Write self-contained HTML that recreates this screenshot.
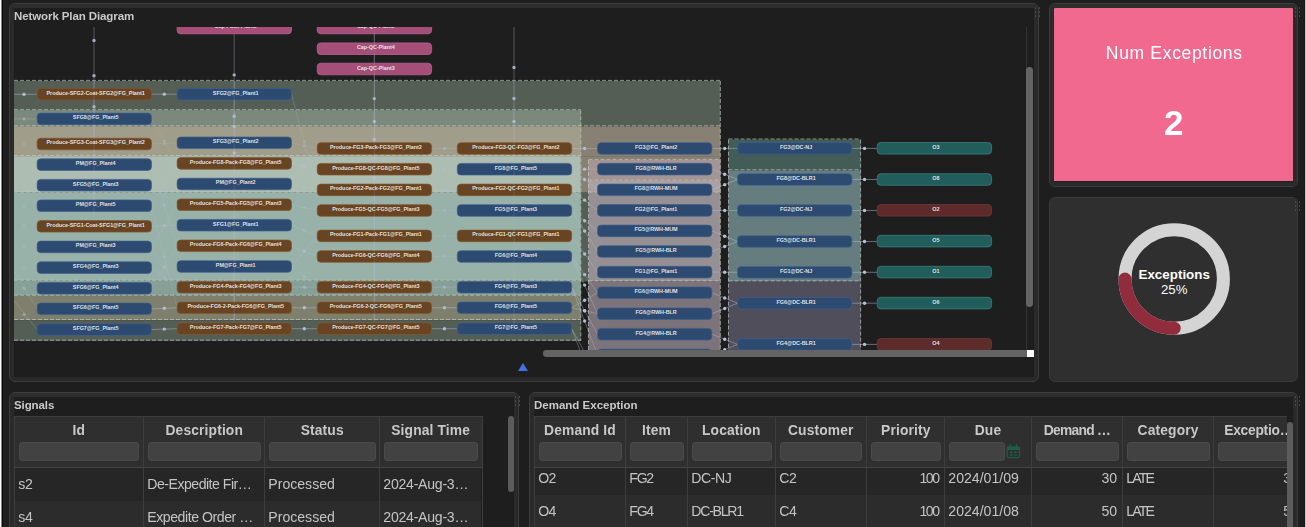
<!DOCTYPE html>
<html><head><meta charset="utf-8"><title>Dashboard</title>
<style>
*{box-sizing:border-box;margin:0;padding:0}
html,body{width:1306px;height:527px;overflow:hidden;background:#1e1e1e;font-family:"Liberation Sans",sans-serif}
body{position:relative}
.edge{position:absolute;left:0;top:0;width:2px;height:527px;background:linear-gradient(90deg,#fff 0,#fff 1.3px,#000 1.7px)}
.edge2{position:absolute;left:2px;top:0;width:1px;height:527px;background:#0a0a0a}
.redge{position:absolute;left:1304px;top:0;width:2px;height:527px;background:linear-gradient(90deg,#171717 0,#171717 1px,#c4c4c4 1px)}
.pw{position:absolute;border:1px solid #3c3c3c;border-radius:6px;background:#2a2a2a}
.panel{position:absolute;left:0;top:0;right:0;bottom:0;border:4px solid #2a2a2a;border-top-color:#2e2e2e;border-radius:5px;background:#1e1e1e;overflow:hidden}
.ptitle,.th span,.td,.pink div{will-change:transform}
.ptitle{position:absolute;left:0;top:2.2px;font-weight:bold;font-size:11.5px;color:#c9c9c9;letter-spacing:-.1px;white-space:nowrap}
.grip{position:absolute;width:6px;height:10px}
.grip b{position:absolute;width:1.6px;height:1.6px;background:#1f6b4e;border-radius:50%}
.dgwrap{position:absolute;left:0;top:18.5px;width:1012px;height:324px;overflow:hidden}
svg.dg text{font-family:"Liberation Sans",sans-serif;font-size:5.45px;font-weight:bold;fill:#f0f0f0;fill-opacity:.92;text-anchor:middle;letter-spacing:-.05px}
.vtrack{position:absolute;left:1012px;top:18.5px;width:1px;height:324px;background:#333}
.vthumb{position:absolute;left:1012.3px;top:58.8px;width:6.8px;height:240.4px;background:#646464;border-radius:3.4px}
.hthumb{position:absolute;left:528.6px;top:342.4px;width:484px;height:6.5px;background:#646464;border-radius:3.3px 0 0 3.3px}
.corner{position:absolute;left:1012.6px;top:342px;width:7px;height:7px;background:#fff}
.tri{position:absolute;left:504.4px;top:355px;width:0;height:0;border-left:5.1px solid transparent;border-right:5.1px solid transparent;border-bottom:8.6px solid #4670e2}
.pink{position:absolute;left:0;top:0;right:0;bottom:1px;background:#f2698f;color:#fff;text-align:center}
.pink .t{position:absolute;left:0;right:0;top:35.1px;font-size:17.6px;white-space:nowrap;letter-spacing:.62px;padding-left:1px}
.pink .n{position:absolute;left:0;right:0;top:95.4px;font-size:35px;font-weight:bold}
.p3{position:absolute;left:1048.5px;top:197px;width:249.5px;height:184.5px;background:#2f2f2f;border:1px solid #3a3a3a;border-radius:6px}
.p3 svg{position:absolute;left:0;top:0}
.p3 text{font-family:"Liberation Sans",sans-serif;fill:#fff;text-anchor:middle}
.tbl{position:absolute;overflow:hidden}
.th{position:absolute;top:0;height:52.5px;background:#2f2f2f;border:1px solid #3d3d3d;border-right:none;border-bottom:1px solid #444;color:#c8c8c8;font-weight:bold;font-size:13.8px;letter-spacing:.15px;text-align:center;white-space:nowrap;overflow:hidden}
.th span{position:absolute;left:0;right:0;top:6.4px}
.th i{position:absolute;left:4px;right:3.5px;top:25.8px;height:18.6px;background:#424242;border-radius:3px;border:1px solid #4a4a4a}
.td{position:absolute;height:33px;border-left:1px solid #3d3d3d;color:#c4c4c4;font-size:14.1px;line-height:33px;padding:0 4.7px 0 3.3px;white-space:nowrap;overflow:hidden}
.td.r0{background:#262626} .td.r1{background:#2c2c2c}
.vs{position:absolute;background:#5c5c5c;border-radius:3.2px}
.cal{position:absolute}
</style></head><body>
<div class="edge"></div><div class="edge2"></div><div class="redge"></div>

<div class="pw" style="left:9px;top:3px;width:1029.5px;height:378.5px"><div class="panel">
 <div class="ptitle">Network Plan Diagram</div>
 <div class="dgwrap">
<svg class="dg" width="1012" height="324" viewBox="14 26.5 1012 324">
<rect x="14" y="80.5" width="706.3" height="45.4" fill="#545e55"/>
<rect x="14" y="109.8" width="566.8" height="16.1" fill="#7b897c"/>
<rect x="14" y="125.9" width="706.3" height="29.7" fill="#888073"/>
<rect x="14" y="125.9" width="566.8" height="29.7" fill="#a09d8a"/>
<rect x="581" y="155.6" width="139.3" height="36.6" fill="#888073"/>
<rect x="14" y="155.6" width="566.8" height="36.6" fill="#aebdb2"/>
<rect x="14" y="192.2" width="566.8" height="88.1" fill="#99b2a9"/>
<rect x="14" y="280.3" width="566.8" height="15.0" fill="#869f97"/>
<rect x="14" y="295.3" width="566.8" height="24.3" fill="#7e806d"/>
<rect x="14" y="319.6" width="566.8" height="20.7" fill="#545e55"/>
<rect x="581" y="192.2" width="7.5" height="88.8" fill="#545e55"/>
<rect x="588.5" y="159.5" width="131.8" height="20.7" fill="#a29594"/>
<rect x="588.5" y="180.2" width="131.8" height="12.0" fill="#aca1a2"/>
<rect x="588.5" y="192.2" width="131.8" height="88.8" fill="#969094"/>
<rect x="588.5" y="281" width="131.8" height="71.0" fill="#7d737a"/>
<rect x="728.5" y="139.1" width="132.1" height="30.8" fill="#435c57"/>
<rect x="728.5" y="169.9" width="132.1" height="111.1" fill="#667d80"/>
<rect x="728.5" y="281" width="132.1" height="71.0" fill="#514e5b"/>
<line x1="14" y1="79.9" x2="720.3" y2="79.9" stroke="#c3cbc2" stroke-opacity=".68" stroke-width="1" stroke-dasharray="4 2"/>
<line x1="720.3" y1="80.5" x2="720.3" y2="352" stroke="#c3cbc2" stroke-opacity=".68" stroke-width="1" stroke-dasharray="4 2"/>
<line x1="14" y1="109.2" x2="580.8" y2="109.2" stroke="#c3cbc2" stroke-opacity=".68" stroke-width="1" stroke-dasharray="4 2"/>
<line x1="14" y1="125.3" x2="720.3" y2="125.3" stroke="#c3cbc2" stroke-opacity=".68" stroke-width="1" stroke-dasharray="4 2"/>
<line x1="14" y1="155.0" x2="580.8" y2="155.0" stroke="#c3cbc2" stroke-opacity=".68" stroke-width="1" stroke-dasharray="4 2"/>
<line x1="14" y1="191.6" x2="580.8" y2="191.6" stroke="#c3cbc2" stroke-opacity=".68" stroke-width="1" stroke-dasharray="4 2"/>
<line x1="14" y1="279.7" x2="580.8" y2="279.7" stroke="#c3cbc2" stroke-opacity=".68" stroke-width="1" stroke-dasharray="4 2"/>
<line x1="14" y1="294.7" x2="580.8" y2="294.7" stroke="#c3cbc2" stroke-opacity=".68" stroke-width="1" stroke-dasharray="4 2"/>
<line x1="14" y1="319.0" x2="580.8" y2="319.0" stroke="#c3cbc2" stroke-opacity=".68" stroke-width="1" stroke-dasharray="4 2"/>
<line x1="14" y1="339.7" x2="580.8" y2="339.7" stroke="#c3cbc2" stroke-opacity=".68" stroke-width="1" stroke-dasharray="4 2"/>
<line x1="580.8" y1="109.8" x2="580.8" y2="340.3" stroke="#c3cbc2" stroke-opacity=".68" stroke-width="1" stroke-dasharray="4 2"/>
<line x1="588.5" y1="158.9" x2="720.3" y2="158.9" stroke="#c3cbc2" stroke-opacity=".68" stroke-width="1" stroke-dasharray="4 2"/>
<line x1="588.5" y1="179.6" x2="720.3" y2="179.6" stroke="#c3cbc2" stroke-opacity=".68" stroke-width="1" stroke-dasharray="4 2"/>
<line x1="588.5" y1="191.6" x2="720.3" y2="191.6" stroke="#c3cbc2" stroke-opacity=".68" stroke-width="1" stroke-dasharray="4 2"/>
<line x1="588.5" y1="280.4" x2="720.3" y2="280.4" stroke="#c3cbc2" stroke-opacity=".68" stroke-width="1" stroke-dasharray="4 2"/>
<line x1="588.5" y1="159.5" x2="588.5" y2="352" stroke="#c3cbc2" stroke-opacity=".68" stroke-width="1" stroke-dasharray="4 2"/>
<line x1="728.5" y1="138.5" x2="860.6" y2="138.5" stroke="#c3cbc2" stroke-opacity=".68" stroke-width="1" stroke-dasharray="4 2"/>
<line x1="728.5" y1="169.3" x2="860.6" y2="169.3" stroke="#c3cbc2" stroke-opacity=".68" stroke-width="1" stroke-dasharray="4 2"/>
<line x1="728.5" y1="280.4" x2="860.6" y2="280.4" stroke="#c3cbc2" stroke-opacity=".68" stroke-width="1" stroke-dasharray="4 2"/>
<line x1="728.5" y1="139.1" x2="728.5" y2="352" stroke="#c3cbc2" stroke-opacity=".68" stroke-width="1" stroke-dasharray="4 2"/>
<line x1="860.6" y1="139.1" x2="860.6" y2="352" stroke="#c3cbc2" stroke-opacity=".68" stroke-width="1" stroke-dasharray="4 2"/>
<line x1="94" y1="26.5" x2="94" y2="215" stroke="#b8c2d6" stroke-opacity="0.45" stroke-width=".8"/>
<circle cx="94" cy="40" r="1.7" fill="#b4c0d8" fill-opacity="0.85"/>
<circle cx="94" cy="75.2" r="1.7" fill="#b4c0d8" fill-opacity="0.85"/>
<circle cx="94" cy="106.2" r="1.7" fill="#b4c0d8" fill-opacity="0.85"/>
<line x1="234.2" y1="26.5" x2="234.2" y2="320" stroke="#b8c2d6" stroke-opacity="0.45" stroke-width=".8"/>
<circle cx="234.2" cy="74.4" r="1.7" fill="#b4c0d8" fill-opacity="0.85"/>
<circle cx="234.2" cy="115.8" r="1.7" fill="#b4c0d8" fill-opacity="0.85"/>
<circle cx="234.2" cy="126" r="1.7" fill="#b4c0d8" fill-opacity="0.85"/>
<circle cx="234.2" cy="152.5" r="1.7" fill="#b4c0d8" fill-opacity="0.85"/>
<line x1="374.3" y1="26.5" x2="374.3" y2="320" stroke="#b8c2d6" stroke-opacity="0.45" stroke-width=".8"/>
<circle cx="374.3" cy="98.1" r="1.7" fill="#b4c0d8" fill-opacity="0.85"/>
<circle cx="374.3" cy="121" r="1.7" fill="#b4c0d8" fill-opacity="0.85"/>
<circle cx="374.3" cy="139" r="1.7" fill="#b4c0d8" fill-opacity="0.85"/>
<circle cx="374.3" cy="152" r="1.7" fill="#b4c0d8" fill-opacity="0.85"/>
<circle cx="374.3" cy="177.5" r="1.7" fill="#b4c0d8" fill-opacity="0.85"/>
<line x1="514" y1="26.5" x2="514" y2="140" stroke="#b8c2d6" stroke-opacity="0.45" stroke-width=".8"/>
<circle cx="514" cy="67" r="1.7" fill="#b4c0d8" fill-opacity="0.85"/>
<circle cx="514" cy="98" r="1.7" fill="#b4c0d8" fill-opacity="0.85"/>
<circle cx="514" cy="121" r="1.7" fill="#b4c0d8" fill-opacity="0.85"/>
<line x1="14" y1="93.8" x2="37" y2="93.8" stroke="#b8c2d6" stroke-opacity="0.55" stroke-width=".8"/>
<circle cx="24" cy="93.8" r="1.7" fill="#b4c0d8" fill-opacity="0.95"/>
<line x1="14" y1="118.4" x2="37" y2="118.4" stroke="#b8c2d6" stroke-opacity="0.3" stroke-width=".8"/>
<circle cx="24" cy="118.4" r="1.7" fill="#b4c0d8" fill-opacity="0.5"/>
<circle cx="24" cy="143.5" r="1.7" fill="#b4c0d8" fill-opacity="0.25"/>
<circle cx="24" cy="164.1" r="1.7" fill="#b4c0d8" fill-opacity="0.25"/>
<circle cx="24" cy="184.7" r="1.7" fill="#b4c0d8" fill-opacity="0.25"/>
<circle cx="24" cy="205.2" r="1.7" fill="#b4c0d8" fill-opacity="0.25"/>
<circle cx="24" cy="225.8" r="1.7" fill="#b4c0d8" fill-opacity="0.25"/>
<circle cx="24" cy="246.4" r="1.7" fill="#b4c0d8" fill-opacity="0.25"/>
<circle cx="24" cy="267.1" r="1.7" fill="#b4c0d8" fill-opacity="0.25"/>
<line x1="14" y1="300" x2="37" y2="329" stroke="#b8c2d6" stroke-opacity="0.3" stroke-width=".8"/>
<circle cx="24" cy="314" r="1.7" fill="#b4c0d8" fill-opacity="0.5"/>
<line x1="14" y1="270" x2="37" y2="308.3" stroke="#b8c2d6" stroke-opacity="0.25" stroke-width=".8"/>
<circle cx="24" cy="287.8" r="1.7" fill="#b4c0d8" fill-opacity="0.45"/>
<line x1="151.5" y1="93.6" x2="177.1" y2="93.7" stroke="#b8c2d6" stroke-opacity="0.55" stroke-width=".8"/>
<circle cx="164.3" cy="93.65" r="1.7" fill="#b4c0d8" fill-opacity="0.95"/>
<line x1="151.5" y1="118.4" x2="177.1" y2="162.9" stroke="#b8c2d6" stroke-opacity="0.22" stroke-width=".8"/>
<circle cx="164.3" cy="140.65" r="1.7" fill="#b4c0d8" fill-opacity="0.3"/>
<line x1="151.5" y1="143.5" x2="177.1" y2="142.3" stroke="#b8c2d6" stroke-opacity="0.22" stroke-width=".8"/>
<circle cx="164.3" cy="142.9" r="1.7" fill="#b4c0d8" fill-opacity="0.3"/>
<line x1="151.5" y1="164.1" x2="177.1" y2="245.3" stroke="#b8c2d6" stroke-opacity="0.22" stroke-width=".8"/>
<circle cx="164.3" cy="204.7" r="1.7" fill="#b4c0d8" fill-opacity="0.3"/>
<line x1="151.5" y1="184.7" x2="177.1" y2="204.2" stroke="#b8c2d6" stroke-opacity="0.22" stroke-width=".8"/>
<circle cx="164.3" cy="194.45" r="1.7" fill="#b4c0d8" fill-opacity="0.3"/>
<line x1="151.5" y1="205.2" x2="177.1" y2="162.9" stroke="#b8c2d6" stroke-opacity="0.22" stroke-width=".8"/>
<circle cx="164.3" cy="184.05" r="1.7" fill="#b4c0d8" fill-opacity="0.3"/>
<line x1="151.5" y1="225.8" x2="177.1" y2="224.7" stroke="#b8c2d6" stroke-opacity="0.22" stroke-width=".8"/>
<circle cx="164.3" cy="225.25" r="1.7" fill="#b4c0d8" fill-opacity="0.3"/>
<line x1="151.5" y1="246.4" x2="177.1" y2="204.2" stroke="#b8c2d6" stroke-opacity="0.22" stroke-width=".8"/>
<circle cx="164.3" cy="225.3" r="1.7" fill="#b4c0d8" fill-opacity="0.3"/>
<line x1="151.5" y1="246.4" x2="177.1" y2="286.7" stroke="#b8c2d6" stroke-opacity="0.22" stroke-width=".8"/>
<circle cx="164.3" cy="266.55" r="1.7" fill="#b4c0d8" fill-opacity="0.3"/>
<line x1="151.5" y1="267.1" x2="177.1" y2="286.7" stroke="#b8c2d6" stroke-opacity="0.22" stroke-width=".8"/>
<circle cx="164.3" cy="276.9" r="1.7" fill="#b4c0d8" fill-opacity="0.3"/>
<line x1="151.5" y1="287.8" x2="177.1" y2="245.3" stroke="#b8c2d6" stroke-opacity="0.22" stroke-width=".8"/>
<circle cx="164.3" cy="266.55" r="1.7" fill="#b4c0d8" fill-opacity="0.3"/>
<line x1="151.5" y1="205.2" x2="177.1" y2="307.3" stroke="#b8c2d6" stroke-opacity="0.22" stroke-width=".8"/>
<circle cx="164.3" cy="256.25" r="1.7" fill="#b4c0d8" fill-opacity="0.3"/>
<line x1="151.5" y1="308.3" x2="177.1" y2="307.3" stroke="#b8c2d6" stroke-opacity="0.55" stroke-width=".8"/>
<circle cx="164.3" cy="307.8" r="1.7" fill="#b4c0d8" fill-opacity="0.95"/>
<line x1="151.5" y1="329.0" x2="177.1" y2="328.2" stroke="#b8c2d6" stroke-opacity="0.55" stroke-width=".8"/>
<circle cx="164.3" cy="328.6" r="1.7" fill="#b4c0d8" fill-opacity="0.95"/>
<line x1="291.5" y1="93.7" x2="317.2" y2="189.4" stroke="#b8c2d6" stroke-opacity="0.27" stroke-width=".8"/>
<circle cx="304.35" cy="141.55" r="1.7" fill="#b4c0d8" fill-opacity="0.35"/>
<line x1="291.5" y1="142.3" x2="317.2" y2="148.0" stroke="#b8c2d6" stroke-opacity="0.27" stroke-width=".8"/>
<circle cx="304.35" cy="145.15" r="1.7" fill="#b4c0d8" fill-opacity="0.35"/>
<line x1="291.5" y1="162.9" x2="317.2" y2="168.7" stroke="#b8c2d6" stroke-opacity="0.27" stroke-width=".8"/>
<circle cx="304.35" cy="165.8" r="1.7" fill="#b4c0d8" fill-opacity="0.35"/>
<line x1="291.5" y1="183.5" x2="317.2" y2="189.4" stroke="#b8c2d6" stroke-opacity="0.27" stroke-width=".8"/>
<circle cx="304.35" cy="186.45" r="1.7" fill="#b4c0d8" fill-opacity="0.35"/>
<line x1="291.5" y1="183.5" x2="317.2" y2="148.0" stroke="#b8c2d6" stroke-opacity="0.27" stroke-width=".8"/>
<circle cx="304.35" cy="165.75" r="1.7" fill="#b4c0d8" fill-opacity="0.35"/>
<line x1="291.5" y1="204.2" x2="317.2" y2="210.0" stroke="#b8c2d6" stroke-opacity="0.27" stroke-width=".8"/>
<circle cx="304.35" cy="207.1" r="1.7" fill="#b4c0d8" fill-opacity="0.35"/>
<line x1="291.5" y1="224.7" x2="317.2" y2="235.4" stroke="#b8c2d6" stroke-opacity="0.27" stroke-width=".8"/>
<circle cx="304.35" cy="230.05" r="1.7" fill="#b4c0d8" fill-opacity="0.35"/>
<line x1="291.5" y1="245.3" x2="317.2" y2="256.0" stroke="#b8c2d6" stroke-opacity="0.27" stroke-width=".8"/>
<circle cx="304.35" cy="250.65" r="1.7" fill="#b4c0d8" fill-opacity="0.35"/>
<line x1="291.5" y1="266.0" x2="317.2" y2="235.4" stroke="#b8c2d6" stroke-opacity="0.27" stroke-width=".8"/>
<circle cx="304.35" cy="250.7" r="1.7" fill="#b4c0d8" fill-opacity="0.35"/>
<line x1="291.5" y1="266.0" x2="317.2" y2="286.7" stroke="#b8c2d6" stroke-opacity="0.27" stroke-width=".8"/>
<circle cx="304.35" cy="276.35" r="1.7" fill="#b4c0d8" fill-opacity="0.35"/>
<line x1="291.5" y1="286.7" x2="317.2" y2="286.7" stroke="#b8c2d6" stroke-opacity="0.4" stroke-width=".8"/>
<circle cx="304.35" cy="286.7" r="1.7" fill="#b4c0d8" fill-opacity="0.6"/>
<line x1="291.5" y1="307.3" x2="317.2" y2="307.3" stroke="#b8c2d6" stroke-opacity="0.55" stroke-width=".8"/>
<circle cx="304.35" cy="307.3" r="1.7" fill="#b4c0d8" fill-opacity="0.95"/>
<line x1="291.5" y1="328.2" x2="317.2" y2="328.2" stroke="#b8c2d6" stroke-opacity="0.55" stroke-width=".8"/>
<circle cx="304.35" cy="328.2" r="1.7" fill="#b4c0d8" fill-opacity="0.95"/>
<line x1="431.6" y1="148.0" x2="457.3" y2="148.0" stroke="#b8c2d6" stroke-opacity="0.3" stroke-width=".8"/>
<circle cx="444.45000000000005" cy="148.0" r="1.7" fill="#b4c0d8" fill-opacity="0.5"/>
<line x1="431.6" y1="168.7" x2="457.3" y2="168.7" stroke="#b8c2d6" stroke-opacity="0.3" stroke-width=".8"/>
<circle cx="444.45000000000005" cy="168.7" r="1.7" fill="#b4c0d8" fill-opacity="0.5"/>
<line x1="431.6" y1="189.4" x2="457.3" y2="189.4" stroke="#b8c2d6" stroke-opacity="0.3" stroke-width=".8"/>
<circle cx="444.45000000000005" cy="189.4" r="1.7" fill="#b4c0d8" fill-opacity="0.5"/>
<line x1="431.6" y1="210.0" x2="457.3" y2="210.0" stroke="#b8c2d6" stroke-opacity="0.22" stroke-width=".8"/>
<circle cx="444.45000000000005" cy="210.0" r="1.7" fill="#b4c0d8" fill-opacity="0.3"/>
<line x1="431.6" y1="235.4" x2="457.3" y2="235.4" stroke="#b8c2d6" stroke-opacity="0.22" stroke-width=".8"/>
<circle cx="444.45000000000005" cy="235.4" r="1.7" fill="#b4c0d8" fill-opacity="0.3"/>
<line x1="431.6" y1="256.0" x2="457.3" y2="256.0" stroke="#b8c2d6" stroke-opacity="0.22" stroke-width=".8"/>
<circle cx="444.45000000000005" cy="256.0" r="1.7" fill="#b4c0d8" fill-opacity="0.3"/>
<line x1="431.6" y1="286.7" x2="457.3" y2="286.7" stroke="#b8c2d6" stroke-opacity="0.4" stroke-width=".8"/>
<circle cx="444.45000000000005" cy="286.7" r="1.7" fill="#b4c0d8" fill-opacity="0.6"/>
<line x1="431.6" y1="307.3" x2="457.3" y2="307.3" stroke="#b8c2d6" stroke-opacity="0.55" stroke-width=".8"/>
<circle cx="444.45000000000005" cy="307.3" r="1.7" fill="#b4c0d8" fill-opacity="0.95"/>
<line x1="431.6" y1="328.2" x2="457.3" y2="328.2" stroke="#b8c2d6" stroke-opacity="0.55" stroke-width=".8"/>
<circle cx="444.45000000000005" cy="328.2" r="1.7" fill="#b4c0d8" fill-opacity="0.95"/>
<line x1="571.7" y1="148.0" x2="597.5" y2="148.0" stroke="#b8c2d6" stroke-opacity="0.45" stroke-width=".8"/>
<circle cx="584.6" cy="148.0" r="1.7" fill="#b4c0d8" fill-opacity="0.95"/>
<line x1="571.7" y1="168.7" x2="597.5" y2="168.6" stroke="#b8c2d6" stroke-opacity="0.45" stroke-width=".8"/>
<circle cx="584.6" cy="168.64999999999998" r="1.7" fill="#b4c0d8" fill-opacity="0.95"/>
<line x1="571.7" y1="168.7" x2="597.5" y2="189.3" stroke="#b8c2d6" stroke-opacity="0.45" stroke-width=".8"/>
<circle cx="584.6" cy="179.0" r="1.7" fill="#b4c0d8" fill-opacity="0.95"/>
<line x1="571.7" y1="189.4" x2="597.5" y2="209.9" stroke="#b8c2d6" stroke-opacity="0.45" stroke-width=".8"/>
<circle cx="584.6" cy="199.65" r="1.7" fill="#b4c0d8" fill-opacity="0.95"/>
<line x1="571.7" y1="210.0" x2="597.5" y2="230.4" stroke="#b8c2d6" stroke-opacity="0.45" stroke-width=".8"/>
<circle cx="584.6" cy="220.2" r="1.7" fill="#b4c0d8" fill-opacity="0.95"/>
<line x1="571.7" y1="210.0" x2="597.5" y2="251.0" stroke="#b8c2d6" stroke-opacity="0.45" stroke-width=".8"/>
<circle cx="584.6" cy="230.5" r="1.7" fill="#b4c0d8" fill-opacity="0.95"/>
<line x1="571.7" y1="235.4" x2="597.5" y2="271.6" stroke="#b8c2d6" stroke-opacity="0.45" stroke-width=".8"/>
<circle cx="584.6" cy="253.5" r="1.7" fill="#b4c0d8" fill-opacity="0.95"/>
<line x1="571.7" y1="256.0" x2="597.5" y2="292.2" stroke="#b8c2d6" stroke-opacity="0.45" stroke-width=".8"/>
<circle cx="584.6" cy="274.1" r="1.7" fill="#b4c0d8" fill-opacity="0.95"/>
<line x1="571.7" y1="256.0" x2="597.5" y2="313.2" stroke="#b8c2d6" stroke-opacity="0.45" stroke-width=".8"/>
<circle cx="584.6" cy="284.6" r="1.7" fill="#b4c0d8" fill-opacity="0.95"/>
<line x1="571.7" y1="307.3" x2="597.5" y2="292.2" stroke="#b8c2d6" stroke-opacity="0.45" stroke-width=".8"/>
<circle cx="584.6" cy="299.75" r="1.7" fill="#b4c0d8" fill-opacity="0.95"/>
<line x1="571.7" y1="307.3" x2="597.5" y2="313.2" stroke="#b8c2d6" stroke-opacity="0.45" stroke-width=".8"/>
<circle cx="584.6" cy="310.25" r="1.7" fill="#b4c0d8" fill-opacity="0.95"/>
<line x1="571.7" y1="286.7" x2="597.5" y2="333.7" stroke="#b8c2d6" stroke-opacity="0.45" stroke-width=".8"/>
<circle cx="584.6" cy="310.2" r="1.7" fill="#b4c0d8" fill-opacity="0.95"/>
<line x1="571.7" y1="286.7" x2="597.5" y2="354.4" stroke="#b8c2d6" stroke-opacity="0.45" stroke-width=".8"/>
<circle cx="584.6" cy="320.54999999999995" r="1.7" fill="#b4c0d8" fill-opacity="0.95"/>
<line x1="571.7" y1="328.2" x2="597.5" y2="375.0" stroke="#b8c2d6" stroke-opacity="0.45" stroke-width=".8"/>
<circle cx="584.6" cy="351.6" r="1.7" fill="#b4c0d8" fill-opacity="0.95"/>
<line x1="571.7" y1="328.2" x2="597.5" y2="395.6" stroke="#b8c2d6" stroke-opacity="0.45" stroke-width=".8"/>
<circle cx="584.6" cy="361.9" r="1.7" fill="#b4c0d8" fill-opacity="0.95"/>
<line x1="711.9" y1="148.0" x2="737.5" y2="147.9" stroke="#b8c2d6" stroke-opacity="0.55" stroke-width=".8"/>
<circle cx="724.7" cy="147.95" r="1.7" fill="#b4c0d8" fill-opacity="1"/>
<line x1="711.9" y1="168.6" x2="737.5" y2="179.0" stroke="#b8c2d6" stroke-opacity="0.55" stroke-width=".8"/>
<circle cx="724.7" cy="173.8" r="1.7" fill="#b4c0d8" fill-opacity="1"/>
<line x1="711.9" y1="189.3" x2="737.5" y2="179.0" stroke="#b8c2d6" stroke-opacity="0.55" stroke-width=".8"/>
<circle cx="724.7" cy="184.15" r="1.7" fill="#b4c0d8" fill-opacity="1"/>
<line x1="711.9" y1="209.9" x2="737.5" y2="210.0" stroke="#b8c2d6" stroke-opacity="0.55" stroke-width=".8"/>
<circle cx="724.7" cy="209.95" r="1.7" fill="#b4c0d8" fill-opacity="1"/>
<line x1="711.9" y1="230.4" x2="737.5" y2="241.0" stroke="#b8c2d6" stroke-opacity="0.55" stroke-width=".8"/>
<circle cx="724.7" cy="235.7" r="1.7" fill="#b4c0d8" fill-opacity="1"/>
<line x1="711.9" y1="251.0" x2="737.5" y2="241.0" stroke="#b8c2d6" stroke-opacity="0.55" stroke-width=".8"/>
<circle cx="724.7" cy="246.0" r="1.7" fill="#b4c0d8" fill-opacity="1"/>
<line x1="711.9" y1="271.6" x2="737.5" y2="271.8" stroke="#b8c2d6" stroke-opacity="0.55" stroke-width=".8"/>
<circle cx="724.7" cy="271.70000000000005" r="1.7" fill="#b4c0d8" fill-opacity="1"/>
<line x1="711.9" y1="292.2" x2="737.5" y2="302.7" stroke="#b8c2d6" stroke-opacity="0.55" stroke-width=".8"/>
<circle cx="724.7" cy="297.45" r="1.7" fill="#b4c0d8" fill-opacity="1"/>
<line x1="711.9" y1="313.2" x2="737.5" y2="302.7" stroke="#b8c2d6" stroke-opacity="0.55" stroke-width=".8"/>
<circle cx="724.7" cy="307.95" r="1.7" fill="#b4c0d8" fill-opacity="1"/>
<line x1="711.9" y1="333.7" x2="737.5" y2="343.9" stroke="#b8c2d6" stroke-opacity="0.55" stroke-width=".8"/>
<circle cx="724.7" cy="338.79999999999995" r="1.7" fill="#b4c0d8" fill-opacity="1"/>
<line x1="711.9" y1="354.4" x2="737.5" y2="343.9" stroke="#b8c2d6" stroke-opacity="0.55" stroke-width=".8"/>
<circle cx="724.7" cy="349.15" r="1.7" fill="#b4c0d8" fill-opacity="1"/>
<line x1="851.9" y1="147.9" x2="877.2" y2="147.9" stroke="#b8c2d6" stroke-opacity="0.6" stroke-width=".8"/>
<circle cx="864.55" cy="147.9" r="1.7" fill="#b4c0d8" fill-opacity="1"/>
<line x1="851.9" y1="179.0" x2="877.2" y2="179.0" stroke="#b8c2d6" stroke-opacity="0.6" stroke-width=".8"/>
<circle cx="864.55" cy="179.0" r="1.7" fill="#b4c0d8" fill-opacity="1"/>
<line x1="851.9" y1="210.0" x2="877.2" y2="210.0" stroke="#b8c2d6" stroke-opacity="0.6" stroke-width=".8"/>
<circle cx="864.55" cy="210.0" r="1.7" fill="#b4c0d8" fill-opacity="1"/>
<line x1="851.9" y1="241.0" x2="877.2" y2="241.0" stroke="#b8c2d6" stroke-opacity="0.6" stroke-width=".8"/>
<circle cx="864.55" cy="241.0" r="1.7" fill="#b4c0d8" fill-opacity="1"/>
<line x1="851.9" y1="271.8" x2="877.2" y2="271.8" stroke="#b8c2d6" stroke-opacity="0.6" stroke-width=".8"/>
<circle cx="864.55" cy="271.8" r="1.7" fill="#b4c0d8" fill-opacity="1"/>
<line x1="851.9" y1="302.7" x2="877.2" y2="302.7" stroke="#b8c2d6" stroke-opacity="0.6" stroke-width=".8"/>
<circle cx="864.55" cy="302.7" r="1.7" fill="#b4c0d8" fill-opacity="1"/>
<line x1="851.9" y1="343.9" x2="877.2" y2="343.9" stroke="#b8c2d6" stroke-opacity="0.6" stroke-width=".8"/>
<circle cx="864.55" cy="343.9" r="1.7" fill="#b4c0d8" fill-opacity="1"/>
<rect x="37.1" y="87.8" width="114.4" height="11.6" rx="3.6" fill="#684422" stroke="#84592f" stroke-width=".7"/>
<text x="95.7" y="94.0">Produce-SFG2-Coat-SFG2@FG_Plant1</text>
<rect x="37.1" y="112.6" width="114.4" height="11.6" rx="3.6" fill="#2d4a70" stroke="#41618f" stroke-width=".7"/>
<text x="95.7" y="118.9">SFG8@FG_Plant5</text>
<rect x="37.1" y="137.7" width="114.4" height="11.6" rx="3.6" fill="#684422" stroke="#84592f" stroke-width=".7"/>
<text x="95.7" y="143.9">Produce-SFG3-Coat-SFG3@FG_Plant2</text>
<rect x="37.1" y="158.3" width="114.4" height="11.6" rx="3.6" fill="#2d4a70" stroke="#41618f" stroke-width=".7"/>
<text x="95.7" y="164.5">PM@FG_Plant4</text>
<rect x="37.1" y="178.9" width="114.4" height="11.6" rx="3.6" fill="#2d4a70" stroke="#41618f" stroke-width=".7"/>
<text x="95.7" y="185.1">SFG5@FG_Plant3</text>
<rect x="37.1" y="199.4" width="114.4" height="11.6" rx="3.6" fill="#2d4a70" stroke="#41618f" stroke-width=".7"/>
<text x="95.7" y="205.6">PM@FG_Plant5</text>
<rect x="37.1" y="220.0" width="114.4" height="11.6" rx="3.6" fill="#684422" stroke="#84592f" stroke-width=".7"/>
<text x="95.7" y="226.2">Produce-SFG1-Coat-SFG1@FG_Plant1</text>
<rect x="37.1" y="240.6" width="114.4" height="11.6" rx="3.6" fill="#2d4a70" stroke="#41618f" stroke-width=".7"/>
<text x="95.7" y="246.8">PM@FG_Plant3</text>
<rect x="37.1" y="261.3" width="114.4" height="11.6" rx="3.6" fill="#2d4a70" stroke="#41618f" stroke-width=".7"/>
<text x="95.7" y="267.6">SFG4@FG_Plant3</text>
<rect x="37.1" y="282.0" width="114.4" height="11.6" rx="3.6" fill="#2d4a70" stroke="#41618f" stroke-width=".7"/>
<text x="95.7" y="288.2">SFG6@FG_Plant4</text>
<rect x="37.1" y="302.5" width="114.4" height="11.6" rx="3.6" fill="#2d4a70" stroke="#41618f" stroke-width=".7"/>
<text x="95.7" y="308.8">SFG6@FG_Plant5</text>
<rect x="37.1" y="323.2" width="114.4" height="11.6" rx="3.6" fill="#2d4a70" stroke="#41618f" stroke-width=".7"/>
<text x="95.7" y="329.4">SFG7@FG_Plant5</text>
<rect x="177.1" y="21.7" width="114.4" height="11.6" rx="3.6" fill="#a44e78" stroke="#c06a99" stroke-width=".7"/>
<text x="235.7" y="27.9">Cap-Pack-Plant5</text>
<rect x="177.1" y="87.9" width="114.4" height="11.6" rx="3.6" fill="#2d4a70" stroke="#41618f" stroke-width=".7"/>
<text x="235.7" y="94.2">SFG2@FG_Plant1</text>
<rect x="177.1" y="136.5" width="114.4" height="11.6" rx="3.6" fill="#2d4a70" stroke="#41618f" stroke-width=".7"/>
<text x="235.7" y="142.8">SFG3@FG_Plant2</text>
<rect x="177.1" y="157.1" width="114.4" height="11.6" rx="3.6" fill="#684422" stroke="#84592f" stroke-width=".7"/>
<text x="235.7" y="163.3">Produce-FG8-Pack-FG8@FG_Plant5</text>
<rect x="177.1" y="177.7" width="114.4" height="11.6" rx="3.6" fill="#2d4a70" stroke="#41618f" stroke-width=".7"/>
<text x="235.7" y="183.9">PM@FG_Plant2</text>
<rect x="177.1" y="198.4" width="114.4" height="11.6" rx="3.6" fill="#684422" stroke="#84592f" stroke-width=".7"/>
<text x="235.7" y="204.6">Produce-FG5-Pack-FG5@FG_Plant3</text>
<rect x="177.1" y="218.9" width="114.4" height="11.6" rx="3.6" fill="#2d4a70" stroke="#41618f" stroke-width=".7"/>
<text x="235.7" y="225.1">SFG1@FG_Plant1</text>
<rect x="177.1" y="239.5" width="114.4" height="11.6" rx="3.6" fill="#684422" stroke="#84592f" stroke-width=".7"/>
<text x="235.7" y="245.8">Produce-FG6-Pack-FG6@FG_Plant4</text>
<rect x="177.1" y="260.2" width="114.4" height="11.6" rx="3.6" fill="#2d4a70" stroke="#41618f" stroke-width=".7"/>
<text x="235.7" y="266.4">PM@FG_Plant1</text>
<rect x="177.1" y="280.9" width="114.4" height="11.6" rx="3.6" fill="#684422" stroke="#84592f" stroke-width=".7"/>
<text x="235.7" y="287.1">Produce-FG4-Pack-FG4@FG_Plant3</text>
<rect x="177.1" y="301.5" width="114.4" height="11.6" rx="3.6" fill="#684422" stroke="#84592f" stroke-width=".7"/>
<text x="235.7" y="307.8">Produce-FG6-2-Pack-FG6@FG_Plant5</text>
<rect x="177.1" y="322.4" width="114.4" height="11.6" rx="3.6" fill="#684422" stroke="#84592f" stroke-width=".7"/>
<text x="235.7" y="328.6">Produce-FG7-Pack-FG7@FG_Plant5</text>
<rect x="317.2" y="21.7" width="114.4" height="11.6" rx="3.6" fill="#a44e78" stroke="#c06a99" stroke-width=".7"/>
<text x="375.8" y="27.9">Cap-QC-Plant5</text>
<rect x="317.2" y="42.4" width="114.4" height="11.6" rx="3.6" fill="#a44e78" stroke="#c06a99" stroke-width=".7"/>
<text x="375.8" y="48.7">Cap-QC-Plant4</text>
<rect x="317.2" y="62.7" width="114.4" height="11.6" rx="3.6" fill="#a44e78" stroke="#c06a99" stroke-width=".7"/>
<text x="375.8" y="69.0">Cap-QC-Plant3</text>
<rect x="317.2" y="142.2" width="114.4" height="11.6" rx="3.6" fill="#684422" stroke="#84592f" stroke-width=".7"/>
<text x="375.8" y="148.4">Produce-FG3-Pack-FG3@FG_Plant2</text>
<rect x="317.2" y="162.9" width="114.4" height="11.6" rx="3.6" fill="#684422" stroke="#84592f" stroke-width=".7"/>
<text x="375.8" y="169.1">Produce-FG8-QC-FG8@FG_Plant5</text>
<rect x="317.2" y="183.6" width="114.4" height="11.6" rx="3.6" fill="#684422" stroke="#84592f" stroke-width=".7"/>
<text x="375.8" y="189.8">Produce-FG2-Pack-FG2@FG_Plant1</text>
<rect x="317.2" y="204.2" width="114.4" height="11.6" rx="3.6" fill="#684422" stroke="#84592f" stroke-width=".7"/>
<text x="375.8" y="210.4">Produce-FG5-QC-FG5@FG_Plant3</text>
<rect x="317.2" y="229.6" width="114.4" height="11.6" rx="3.6" fill="#684422" stroke="#84592f" stroke-width=".7"/>
<text x="375.8" y="235.8">Produce-FG1-Pack-FG1@FG_Plant1</text>
<rect x="317.2" y="250.2" width="114.4" height="11.6" rx="3.6" fill="#684422" stroke="#84592f" stroke-width=".7"/>
<text x="375.8" y="256.4">Produce-FG6-QC-FG6@FG_Plant4</text>
<rect x="317.2" y="280.9" width="114.4" height="11.6" rx="3.6" fill="#684422" stroke="#84592f" stroke-width=".7"/>
<text x="375.8" y="287.1">Produce-FG4-QC-FG4@FG_Plant3</text>
<rect x="317.2" y="301.5" width="114.4" height="11.6" rx="3.6" fill="#684422" stroke="#84592f" stroke-width=".7"/>
<text x="375.8" y="307.8">Produce-FG6-2-QC-FG6@FG_Plant5</text>
<rect x="317.2" y="322.4" width="114.4" height="11.6" rx="3.6" fill="#684422" stroke="#84592f" stroke-width=".7"/>
<text x="375.8" y="328.6">Produce-FG7-QC-FG7@FG_Plant5</text>
<rect x="457.3" y="142.2" width="114.4" height="11.6" rx="3.6" fill="#684422" stroke="#84592f" stroke-width=".7"/>
<text x="515.9" y="148.4">Produce-FG3-QC-FG3@FG_Plant2</text>
<rect x="457.3" y="162.9" width="114.4" height="11.6" rx="3.6" fill="#2d4a70" stroke="#41618f" stroke-width=".7"/>
<text x="515.9" y="169.1">FG8@FG_Plant5</text>
<rect x="457.3" y="183.6" width="114.4" height="11.6" rx="3.6" fill="#684422" stroke="#84592f" stroke-width=".7"/>
<text x="515.9" y="189.8">Produce-FG2-QC-FG2@FG_Plant1</text>
<rect x="457.3" y="204.2" width="114.4" height="11.6" rx="3.6" fill="#2d4a70" stroke="#41618f" stroke-width=".7"/>
<text x="515.9" y="210.4">FG5@FG_Plant3</text>
<rect x="457.3" y="229.6" width="114.4" height="11.6" rx="3.6" fill="#684422" stroke="#84592f" stroke-width=".7"/>
<text x="515.9" y="235.8">Produce-FG1-QC-FG1@FG_Plant1</text>
<rect x="457.3" y="250.2" width="114.4" height="11.6" rx="3.6" fill="#2d4a70" stroke="#41618f" stroke-width=".7"/>
<text x="515.9" y="256.4">FG6@FG_Plant4</text>
<rect x="457.3" y="280.9" width="114.4" height="11.6" rx="3.6" fill="#2d4a70" stroke="#41618f" stroke-width=".7"/>
<text x="515.9" y="287.1">FG4@FG_Plant3</text>
<rect x="457.3" y="301.5" width="114.4" height="11.6" rx="3.6" fill="#2d4a70" stroke="#41618f" stroke-width=".7"/>
<text x="515.9" y="307.8">FG6@FG_Plant5</text>
<rect x="457.3" y="322.4" width="114.4" height="11.6" rx="3.6" fill="#2d4a70" stroke="#41618f" stroke-width=".7"/>
<text x="515.9" y="328.6">FG7@FG_Plant5</text>
<rect x="597.5" y="142.2" width="114.4" height="11.6" rx="3.6" fill="#2d4a70" stroke="#41618f" stroke-width=".7"/>
<text x="656.1" y="148.4">FG3@FG_Plant2</text>
<rect x="597.5" y="162.8" width="114.4" height="11.6" rx="3.6" fill="#2d4a70" stroke="#41618f" stroke-width=".7"/>
<text x="656.1" y="169.0">FG8@RWH-BLR</text>
<rect x="597.5" y="183.5" width="114.4" height="11.6" rx="3.6" fill="#2d4a70" stroke="#41618f" stroke-width=".7"/>
<text x="656.1" y="189.8">FG8@RWH-MUM</text>
<rect x="597.5" y="204.1" width="114.4" height="11.6" rx="3.6" fill="#2d4a70" stroke="#41618f" stroke-width=".7"/>
<text x="656.1" y="210.3">FG2@FG_Plant1</text>
<rect x="597.5" y="224.6" width="114.4" height="11.6" rx="3.6" fill="#2d4a70" stroke="#41618f" stroke-width=".7"/>
<text x="656.1" y="230.8">FG5@RWH-MUM</text>
<rect x="597.5" y="245.2" width="114.4" height="11.6" rx="3.6" fill="#2d4a70" stroke="#41618f" stroke-width=".7"/>
<text x="656.1" y="251.4">FG5@RWH-BLR</text>
<rect x="597.5" y="265.8" width="114.4" height="11.6" rx="3.6" fill="#2d4a70" stroke="#41618f" stroke-width=".7"/>
<text x="656.1" y="272.1">FG1@FG_Plant1</text>
<rect x="597.5" y="286.4" width="114.4" height="11.6" rx="3.6" fill="#2d4a70" stroke="#41618f" stroke-width=".7"/>
<text x="656.1" y="292.6">FG6@RWH-MUM</text>
<rect x="597.5" y="307.4" width="114.4" height="11.6" rx="3.6" fill="#2d4a70" stroke="#41618f" stroke-width=".7"/>
<text x="656.1" y="313.6">FG6@RWH-BLR</text>
<rect x="597.5" y="327.9" width="114.4" height="11.6" rx="3.6" fill="#2d4a70" stroke="#41618f" stroke-width=".7"/>
<text x="656.1" y="334.1">FG4@RWH-BLR</text>
<rect x="597.5" y="348.6" width="114.4" height="11.6" rx="3.6" fill="#2d4a70" stroke="#41618f" stroke-width=".7"/>
<text x="656.1" y="354.8">FG4@RWH-MUM</text>
<rect x="737.5" y="142.1" width="114.4" height="11.6" rx="3.6" fill="#2d4a70" stroke="#41618f" stroke-width=".7"/>
<text x="796.1" y="148.3">FG3@DC-NJ</text>
<rect x="737.5" y="173.2" width="114.4" height="11.6" rx="3.6" fill="#2d4a70" stroke="#41618f" stroke-width=".7"/>
<text x="796.1" y="179.4">FG8@DC-BLR1</text>
<rect x="737.5" y="204.2" width="114.4" height="11.6" rx="3.6" fill="#2d4a70" stroke="#41618f" stroke-width=".7"/>
<text x="796.1" y="210.4">FG2@DC-NJ</text>
<rect x="737.5" y="235.2" width="114.4" height="11.6" rx="3.6" fill="#2d4a70" stroke="#41618f" stroke-width=".7"/>
<text x="796.1" y="241.4">FG5@DC-BLR1</text>
<rect x="737.5" y="266.0" width="114.4" height="11.6" rx="3.6" fill="#2d4a70" stroke="#41618f" stroke-width=".7"/>
<text x="796.1" y="272.2">FG1@DC-NJ</text>
<rect x="737.5" y="296.9" width="114.4" height="11.6" rx="3.6" fill="#2d4a70" stroke="#41618f" stroke-width=".7"/>
<text x="796.1" y="303.1">FG6@DC-BLR1</text>
<rect x="737.5" y="338.1" width="114.4" height="11.6" rx="3.6" fill="#2d4a70" stroke="#41618f" stroke-width=".7"/>
<text x="796.1" y="344.3">FG4@DC-BLR1</text>
<rect x="877.2" y="142.0" width="114.4" height="11.6" rx="3.6" fill="#205d5b" stroke="#3f8682" stroke-width=".7"/>
<text x="935.8" y="148.2">O3</text>
<rect x="877.2" y="173.2" width="114.4" height="11.6" rx="3.6" fill="#205d5b" stroke="#3f8682" stroke-width=".7"/>
<text x="935.8" y="179.4">O8</text>
<rect x="877.2" y="204.0" width="114.4" height="11.6" rx="3.6" fill="#5d2b2a" stroke="#7a3a3a" stroke-width=".7"/>
<text x="935.8" y="210.2">O2</text>
<rect x="877.2" y="234.8" width="114.4" height="11.6" rx="3.6" fill="#205d5b" stroke="#3f8682" stroke-width=".7"/>
<text x="935.8" y="241.0">O5</text>
<rect x="877.2" y="265.8" width="114.4" height="11.6" rx="3.6" fill="#205d5b" stroke="#3f8682" stroke-width=".7"/>
<text x="935.8" y="272.1">O1</text>
<rect x="877.2" y="296.8" width="114.4" height="11.6" rx="3.6" fill="#205d5b" stroke="#3f8682" stroke-width=".7"/>
<text x="935.8" y="303.1">O6</text>
<rect x="877.2" y="338.1" width="114.4" height="11.6" rx="3.6" fill="#5d2b2a" stroke="#7a3a3a" stroke-width=".7"/>
<text x="935.8" y="344.3">O4</text>
<line x1="94" y1="80" x2="94" y2="215" stroke="#b8c2d6" stroke-opacity=".22" stroke-width=".8"/>
<line x1="234.2" y1="80" x2="234.2" y2="320" stroke="#b8c2d6" stroke-opacity=".22" stroke-width=".8"/>
<line x1="374.3" y1="26.5" x2="374.3" y2="320" stroke="#b8c2d6" stroke-opacity=".22" stroke-width=".8"/>
<line x1="514" y1="140" x2="514" y2="330" stroke="#b8c2d6" stroke-opacity=".22" stroke-width=".8"/>
</svg>
 </div>
 <div class="vtrack"></div><div class="vthumb"></div><div class="hthumb"></div><div class="corner"></div>
 <div class="tri"></div>
</div></div>
<div class="grip" style="left:1034.7px;top:7.2px"><b style="left:0;top:0"></b><b style="left:4px;top:0"></b><b style="left:0;top:4px"></b><b style="left:4px;top:4px"></b><b style="left:0;top:8px"></b><b style="left:4px;top:8px"></b></div>

<div class="pw" style="left:1048.5px;top:3px;width:249.5px;height:184px"><div class="panel" style="background:#14241e">
 <div class="pink"><div class="t">Num Exceptions</div><div class="n">2</div></div>
</div></div>
<div class="grip" style="left:1294.5px;top:7.2px"><b style="left:0;top:0"></b><b style="left:4px;top:0"></b><b style="left:0;top:4px"></b><b style="left:4px;top:4px"></b><b style="left:0;top:8px"></b><b style="left:4px;top:8px"></b></div>

<div class="p3">
 <svg width="248" height="183" viewBox="1049.5 198 248 183">
  <circle cx="1173.7" cy="279" r="49.2" fill="none" stroke="#d4d4d4" stroke-width="13"/>
  <path d="M 1173.7 328.2 A 49.2 49.2 0 0 1 1124.5 279" fill="none" stroke="#912c3d" stroke-width="13" stroke-linecap="round"/>
  <text x="1173.7" y="279.4" font-size="13.4" font-weight="bold">Exceptions</text>
  <text x="1173.7" y="294.4" font-size="13.2">25%</text>
 </svg>
</div>
<div class="grip" style="left:1294.5px;top:201.2px"><b style="left:0;top:0"></b><b style="left:4px;top:0"></b><b style="left:0;top:4px"></b><b style="left:4px;top:4px"></b><b style="left:0;top:8px"></b><b style="left:4px;top:8px"></b></div>

<div class="pw" style="left:9px;top:392px;width:510px;height:160px"><div class="panel">
 <div class="ptitle" style="top:1.8px">Signals</div>
 <div class="tbl" style="left:0;top:18.5px;width:468.8px;height:130px;border-right:1px solid #3d3d3d">
<div class="td r0" style="left:0.0px;width:128.5px;top:52.5px;text-align:left;letter-spacing:-0.3px">s2</div>
<div class="td r0" style="left:128.5px;width:121.5px;top:52.5px;text-align:left;letter-spacing:-0.5px">De-Expedite Fir…</div>
<div class="td r0" style="left:250.0px;width:115.4px;top:52.5px;text-align:left">Processed</div>
<div class="td r0" style="left:365.4px;width:102.4px;top:52.5px;text-align:left;letter-spacing:-0.25px">2024-Aug-3…</div>
<div class="td r1" style="left:0.0px;width:128.5px;top:85.5px;text-align:left;letter-spacing:-0.3px">s4</div>
<div class="td r1" style="left:128.5px;width:121.5px;top:85.5px;text-align:left;letter-spacing:-0.45px">Expedite Order …</div>
<div class="td r1" style="left:250.0px;width:115.4px;top:85.5px;text-align:left">Processed</div>
<div class="td r1" style="left:365.4px;width:102.4px;top:85.5px;text-align:left;letter-spacing:-0.25px">2024-Aug-3…</div>
<div class="th" style="left:0.0px;width:128.5px"><span>Id</span><i></i></div>
<div class="th" style="left:128.5px;width:121.5px"><span>Description</span><i></i></div>
<div class="th" style="left:250.0px;width:115.4px"><span>Status</span><i></i></div>
<div class="th" style="left:365.4px;width:102.4px"><span>Signal Time</span><i></i></div>
 </div>
 <div class="vs" style="left:493.5px;top:18.6px;width:6.4px;height:76px"></div>
</div></div>
<div class="grip" style="left:514.8px;top:396.2px"><b style="left:0;top:0"></b><b style="left:4px;top:0"></b><b style="left:0;top:4px"></b><b style="left:4px;top:4px"></b><b style="left:0;top:8px"></b><b style="left:4px;top:8px"></b></div>

<div class="pw" style="left:529.4px;top:392px;width:768.6px;height:160px"><div class="panel">
 <div class="ptitle" style="top:1.8px;left:-.8px;letter-spacing:0">Demand Exception</div>
 <div class="tbl" style="left:0;top:18.5px;width:753px;height:130px">
<div class="td r0" style="left:0.0px;width:91.0px;top:46.0px;text-align:left;letter-spacing:-0.65px">O2</div>
<div class="td r0" style="left:91.0px;width:62.1px;top:46.0px;text-align:left;letter-spacing:-1.25px">FG2</div>
<div class="td r0" style="left:153.1px;width:87.7px;top:46.0px;text-align:left;letter-spacing:-0.45px">DC-NJ</div>
<div class="td r0" style="left:240.8px;width:90.5px;top:46.0px;text-align:left;letter-spacing:-0.55px">C2</div>
<div class="td r0" style="left:331.3px;width:78.7px;top:46.0px;text-align:right;letter-spacing:-1.45px;padding-right:6.15px">100</div>
<div class="td r0" style="left:410.0px;width:87.0px;top:46.0px;text-align:left">2024/01/09</div>
<div class="td r0" style="left:497.0px;width:90.9px;top:46.0px;text-align:right">30</div>
<div class="td r0" style="left:587.9px;width:91.2px;top:46.0px;text-align:left;letter-spacing:-1.85px">LATE</div>
<div class="td r0" style="left:679.1px;width:90.5px;top:46.0px;text-align:right">30</div>
<div class="td r1" style="left:0.0px;width:91.0px;top:79.0px;text-align:left;letter-spacing:-0.65px">O4</div>
<div class="td r1" style="left:91.0px;width:62.1px;top:79.0px;text-align:left;letter-spacing:-1.25px">FG4</div>
<div class="td r1" style="left:153.1px;width:87.7px;top:79.0px;text-align:left;letter-spacing:-1.25px">DC-BLR1</div>
<div class="td r1" style="left:240.8px;width:90.5px;top:79.0px;text-align:left;letter-spacing:-0.55px">C4</div>
<div class="td r1" style="left:331.3px;width:78.7px;top:79.0px;text-align:right;letter-spacing:-1.45px;padding-right:6.15px">100</div>
<div class="td r1" style="left:410.0px;width:87.0px;top:79.0px;text-align:left">2024/01/08</div>
<div class="td r1" style="left:497.0px;width:90.9px;top:79.0px;text-align:right">50</div>
<div class="td r1" style="left:587.9px;width:91.2px;top:79.0px;text-align:left;letter-spacing:-1.85px">LATE</div>
<div class="td r1" style="left:679.1px;width:90.5px;top:79.0px;text-align:right">50</div>
<div class="th" style="left:0.0px;width:91.0px"><span>Demand Id</span><i></i></div>
<div class="th" style="left:91.0px;width:62.1px"><span>Item</span><i></i></div>
<div class="th" style="left:153.1px;width:87.7px"><span>Location</span><i></i></div>
<div class="th" style="left:240.8px;width:90.5px"><span>Customer</span><i></i></div>
<div class="th" style="left:331.3px;width:78.7px"><span>Priority</span><i></i></div>
<div class="th" style="left:410.0px;width:87.0px"><span>Due</span><i style="right:26.3px"></i></div>
<div class="th" style="left:497.0px;width:90.9px"><span style="letter-spacing:-0.7px">Demand …</span><i></i></div>
<div class="th" style="left:587.9px;width:91.2px"><span>Category</span><i></i></div>
<div class="th" style="left:679.1px;width:90.5px"><span style="letter-spacing:-0.25px">Exceptio…</span><i></i></div>
 <svg class="cal" style="left:472.1px;top:28.5px" width="14.7" height="14.7" viewBox="0 0 15 15"><g fill="none" stroke="#1d5c46"><rect x="1.2" y="2.8" width="12.6" height="11.2" rx="1.6" stroke-width="1.2"/><path d="M4.3 .3v2.6M10.7 .3v2.6" stroke-width="1.2" stroke-linecap="round"/></g><g fill="#1d5c46"><path d="M1.2 4.2 a1.5 1.5 0 0 1 1.5-1.5h9.6a1.5 1.5 0 0 1 1.5 1.5v1.9H1.2z"/><rect x="3.9" y="7.7" width="3" height="1.4" rx=".3"/><rect x="8.2" y="7.7" width="3" height="1.4" rx=".3"/><rect x="3.9" y="10.5" width="3" height="1.4" rx=".3"/><rect x="8.2" y="10.5" width="3" height="1.4" rx=".3"/></g></svg>
 </div>
 <div class="vs" style="left:752.6px;top:24.6px;width:6.2px;height:130px"></div>
</div></div>
<div class="grip" style="left:1294.5px;top:396.2px"><b style="left:0;top:0"></b><b style="left:4px;top:0"></b><b style="left:0;top:4px"></b><b style="left:4px;top:4px"></b><b style="left:0;top:8px"></b><b style="left:4px;top:8px"></b></div>
</body></html>
